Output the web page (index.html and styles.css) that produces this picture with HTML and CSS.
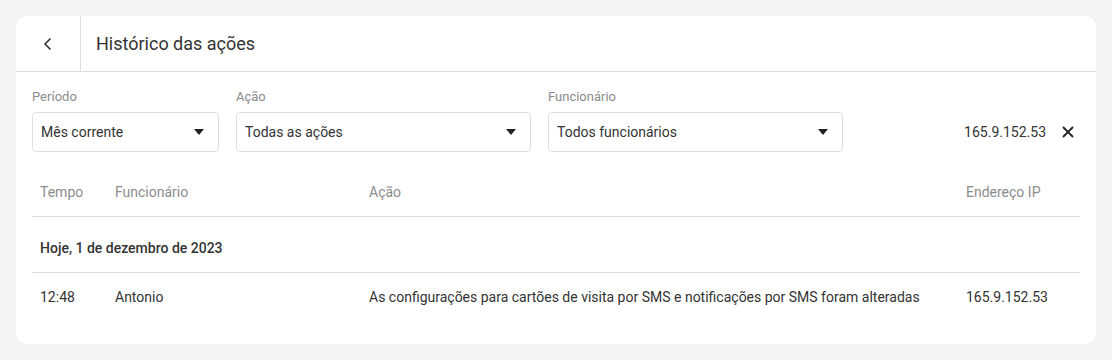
FILE: index.html
```html
<!DOCTYPE html>
<html lang="pt">
<head>
  <meta charset="UTF-8" />
  <title>Histórico das ações</title>
  <link rel="stylesheet" href="styles.css">
</head>
<body>
  <div class="card">
    <div class="card-header">
      <button class="back-btn" type="button" aria-label="Voltar">
        <svg width="16" height="16" viewBox="0 0 16 16"><path d="M10.5 2.5 5 8l5.5 5.5" fill="none" stroke="#333" stroke-width="1.6"/></svg>
      </button>
      <h1>Histórico das ações</h1>
    </div>

    <div class="filters">
      <div class="field field-period">
        <label>Período</label>
        <div class="select"><span>Mês corrente</span><i class="caret"></i></div>
      </div>
      <div class="field field-wide">
        <label>Ação</label>
        <div class="select"><span>Todas as ações</span><i class="caret"></i></div>
      </div>
      <div class="field field-wide">
        <label>Funcionário</label>
        <div class="select"><span>Todos funcionários</span><i class="caret"></i></div>
      </div>
      <div class="ip-filter">
        <span>165.9.152.53</span>
        <button class="clear-btn" type="button" aria-label="Limpar">
          <svg width="12" height="12" viewBox="0 0 12 12"><path d="M1 1l10 10M11 1 1 11" stroke="#222" stroke-width="1.8"/></svg>
        </button>
      </div>
    </div>

    <div class="log-table">
      <div class="row head">
        <div>Tempo</div>
        <div>Funcionário</div>
        <div>Ação</div>
        <div>Endereço IP</div>
      </div>
      <div class="group">Hoje, 1 de dezembro de 2023</div>
      <div class="row">
        <div>12:48</div>
        <div>Antonio</div>
        <div>As configurações para cartões de visita por SMS e notificações por SMS foram alteradas</div>
        <div>165.9.152.53</div>
      </div>
    </div>
  </div>
</body>
</html>
```

FILE: styles.css
```css
:root {
  --bg: #f2f3f2;
  --text: #333;
  --muted: #8c8c8c;
  --line: #dedede;
}

body {
  margin: 0;
  padding: 16px;
  background: var(--bg);
  color: var(--text);
  font-family: Roboto, 'Liberation Sans', sans-serif;
  font-size: 14px;
}

.card {
  background: #fff;
  border-radius: 10px;
  padding-bottom: 23px;
}

.card-header {
  display: flex;
  align-items: stretch;
  height: 55px;
  border-bottom: 1px solid var(--line);
}

.back-btn {
  width: 65px;
  border: none;
  border-right: 1px solid var(--line);
  background: none;
  padding: 0;
  display: flex;
  align-items: center;
  justify-content: center;
  cursor: pointer;
}

.card-header h1 {
  margin: 0 0 0 15px;
  align-self: center;
  font-size: 18px;
  font-weight: 400;
  color: var(--text);
}

/* filters */

.filters {
  display: flex;
  align-items: flex-end;
  gap: 17px;
  padding: 17px 16px 0;
}

.field label {
  display: block;
  font-size: 13px;
  line-height: 16px;
  color: var(--muted);
  margin-bottom: 7px;
}

.field-period { width: 187px; }
.field-wide { width: 295px; }

.select {
  height: 38px;
  border: 1px solid var(--line);
  border-radius: 4px;
  display: flex;
  align-items: center;
  justify-content: space-between;
  padding: 0 14px 0 8px;
  cursor: pointer;
}

.caret {
  width: 0;
  height: 0;
  border-left: 5.5px solid transparent;
  border-right: 5.5px solid transparent;
  border-top: 6px solid #222;
}

.ip-filter {
  margin-left: auto;
  height: 40px;
  display: flex;
  align-items: center;
  gap: 10px;
}

.clear-btn {
  width: 24px;
  height: 24px;
  border: none;
  background: none;
  padding: 0;
  display: flex;
  align-items: center;
  justify-content: center;
  cursor: pointer;
}

/* table */

.log-table {
  margin: 16px 16px 0;
}

.row {
  display: grid;
  grid-template-columns: 75px 254px 1fr 122px;
  height: 48px;
  align-items: center;
}

.row > div {
  padding-left: 8px;
}

.row.head {
  color: var(--muted);
  border-bottom: 1px solid var(--line);
}

.group {
  padding: 23px 8px 16px;
  line-height: 16px;
  font-weight: 500;
  border-bottom: 1px solid var(--line);
}
```
